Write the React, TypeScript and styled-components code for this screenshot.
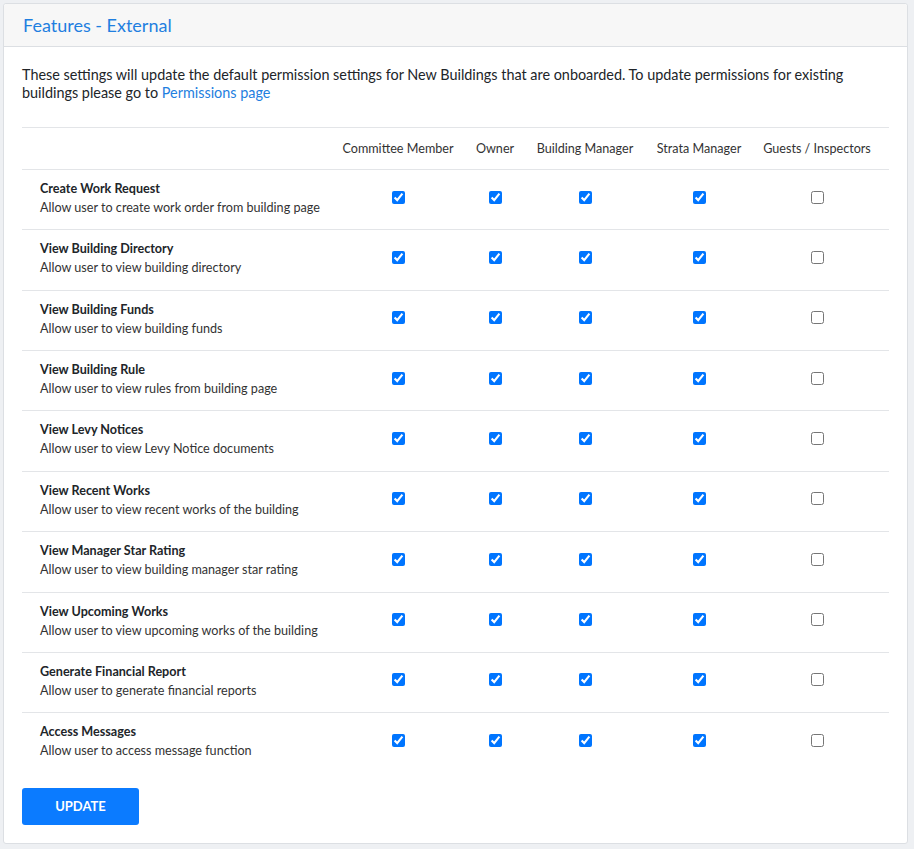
import styled, { createGlobalStyle } from 'styled-components';

const GlobalStyle = createGlobalStyle`
  html, body {
    margin: 0;
    background: #eef0f3;
  }
  body {
    padding: 3px 6px 7px 3px;
    font-family: Lato, "Liberation Sans", sans-serif;
    color: #212529;
  }
`;

const Card = styled.div`
  background: #fff;
  border: 1px solid #dcdfe3;
  border-radius: 3px;
`;

const CardHeader = styled.div`
  height: 42px;
  display: flex;
  align-items: center;
  padding: 0 19px;
  background: #f7f7f7;
  border-bottom: 1px solid #dcdfe3;
  border-radius: 3px 3px 0 0;
`;

const Title = styled.h2`
  margin: 0;
  font-size: 18px;
  font-weight: 400;
  color: #1f7fe0;
`;

const CardBody = styled.div`
  padding: 19px 18px 18px 18px;
`;

const Intro = styled.p`
  margin: 0 0 25px 0;
  font-size: 14.4px;
  line-height: 18px;
  color: #212529;

  a {
    color: #1f7fe0;
    text-decoration: none;
  }
`;

const Table = styled.div`
  border-top: 1px solid #e3e5e8;
`;

const Row = styled.div<{ head?: boolean }>`
  display: grid;
  grid-template-columns: 1fr 134px 60px 120px 108px 128px;
  padding-right: 8px;
  align-items: center;
  border-top: ${({ head }) => (head ? 'none' : '1px solid #e3e5e8')};
  padding-top: ${({ head }) => (head ? '10.5px' : '9px')};
  padding-bottom: ${({ head }) => (head ? '11.5px' : '12.37px')};
`;

const HeadCell = styled.div`
  font-size: 12.6px;
  line-height: 19px;
  color: #333;
  text-align: center;
  white-space: nowrap;
`;

const Label = styled.div`
  padding-left: 18px;
  font-size: 12.6px;
  line-height: 19px;
`;

const LabelTitle = styled.div`
  font-weight: 700;
  color: #212529;
`;

const LabelDesc = styled.div`
  color: #333;
`;

const CheckCell = styled.div`
  display: flex;
  justify-content: center;
  input {
    margin: 0;
    width: 13px;
    height: 13px;
    position: relative;
    top: -1px;
  }
`;

const UpdateButton = styled.button`
  margin-top: 15px;
  width: 117px;
  height: 37px;
  border: none;
  border-radius: 3px;
  background: #0b7bff;
  color: #fff;
  font-family: Lato, "Liberation Sans", sans-serif;
  font-size: 13px;
  font-weight: 700;
  text-transform: uppercase;
  cursor: pointer;
`;

const roles = ['Committee Member', 'Owner', 'Building Manager', 'Strata Manager', 'Guests / Inspectors'];

const features = [
  ['Create Work Request', 'Allow user to create work order from building page'],
  ['View Building Directory', 'Allow user to view building directory'],
  ['View Building Funds', 'Allow user to view building funds'],
  ['View Building Rule', 'Allow user to view rules from building page'],
  ['View Levy Notices', 'Allow user to view Levy Notice documents'],
  ['View Recent Works', 'Allow user to view recent works of the building'],
  ['View Manager Star Rating', 'Allow user to view building manager star rating'],
  ['View Upcoming Works', 'Allow user to view upcoming works of the building'],
  ['Generate Financial Report', 'Allow user to generate financial reports'],
  ['Access Messages', 'Allow user to access message function'],
];

export default function App() {
  return (
    <>
      <GlobalStyle />
      <Card>
        <CardHeader>
          <Title>Features - External</Title>
        </CardHeader>
        <CardBody>
          <Intro>
            These settings will update the default permission settings for New Buildings that are onboarded. To update permissions for existing buildings please go to <a href="#">Permissions page</a>
          </Intro>
          <Table>
            <Row head>
              <div />
              {roles.map(r => <HeadCell key={r}>{r}</HeadCell>)}
            </Row>
            {features.map(([title, desc]) => (
              <Row key={title}>
                <Label>
                  <LabelTitle>{title}</LabelTitle>
                  <LabelDesc>{desc}</LabelDesc>
                </Label>
                {roles.map((r, i) => (
                  <CheckCell key={r}>
                    <input type="checkbox" defaultChecked={i < 4} />
                  </CheckCell>
                ))}
              </Row>
            ))}
          </Table>
          <UpdateButton>Update</UpdateButton>
        </CardBody>
      </Card>
    </>
  );
}
